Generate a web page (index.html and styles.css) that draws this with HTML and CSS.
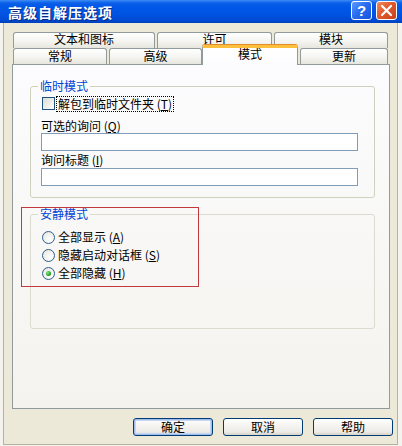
FILE: index.html
```html
<!DOCTYPE html>
<html lang="zh-CN">
<head>
<meta charset="utf-8">
<title>高级自解压选项</title>
<link rel="stylesheet" href="styles.css">
</head>
<body>
<div class="window">
  <div class="titlebar">
    <span class="title">高级自解压选项</span>
    <div class="caption-btns">
      <span class="cap help">?</span>
      <span class="cap close"><svg width="13" height="13" viewBox="0 0 13 13"><path d="M2 2 L11 11 M11 2 L2 11" stroke="#fff" stroke-width="2.2" stroke-linecap="round"/></svg></span>
    </div>
  </div>
  <div class="client">
    <div class="tabrow row1">
      <div class="tab t-text">文本和图标</div>
      <div class="tab t-license">许可</div>
      <div class="tab t-module">模块</div>
    </div>
    <div class="tabrow row2">
      <div class="tab t-general">常规</div>
      <div class="tab t-advanced">高级</div>
      <div class="tab t-mode selected">模式</div>
      <div class="tab t-update">更新</div>
    </div>
    <div class="panel">
      <fieldset class="group g1">
        <legend>临时模式</legend>
        <div class="check-row">
          <span class="checkbox"></span>
          <span class="focus">解包到临时文件夹 (<u>T</u>)</span>
        </div>
        <div class="field-label l1">可选的询问 (<u>Q</u>)</div>
        <div class="edit"></div>
        <div class="field-label l2">询问标题 (<u>I</u>)</div>
        <div class="edit e2"></div>
      </fieldset>
      <fieldset class="group g2">
        <legend>安静模式</legend>
        <div class="radio-row"><span class="radio"></span><span class="rlabel">全部显示 (<u>A</u>)</span></div>
        <div class="radio-row"><span class="radio"></span><span class="rlabel">隐藏启动对话框 (<u>S</u>)</span></div>
        <div class="radio-row"><span class="radio checked"></span><span class="rlabel">全部隐藏 (<u>H</u>)</span></div>
      </fieldset>
      <div class="highlight"></div>
    </div>
    <div class="buttons">
      <div class="btn default">确定</div>
      <div class="btn">取消</div>
      <div class="btn">帮助</div>
    </div>
  </div>
</div>
</body>
</html>
```
FILE: styles.css
```css
* { box-sizing: border-box; }
html, body { margin: 0; padding: 0; }
body {
  width: 402px;
  height: 446px;
  overflow: hidden;
  background: #f4f3ee;
  font-family: "Noto Sans CJK SC", "Noto Sans", sans-serif;
  font-size: 12px;
  color: #000;
}
.window { display: flex; flex-direction: column; }

/* title bar */
.titlebar {
  height: 23px;
  display: flex;
  align-items: center;
  justify-content: space-between;
  padding: 0 5px 0 8px;
  background: linear-gradient(#3d8df6 0, #0b5fe8 3px, #0057e7 7px, #0054e3 60%, #0049d2 90%, #003fb8 100%);
}
.title {
  color: #fff;
  font-weight: bold;
  font-size: 14px;
  letter-spacing: 1px;
  line-height: 16px;
  text-shadow: 1px 1px 0 #0a2a80;
}
.caption-btns { display: flex; gap: 4px; align-items: center; margin-top: -2px; }
.cap {
  width: 21px;
  height: 19px;
  border: 1px solid #fff;
  border-radius: 3px;
  display: flex;
  align-items: center;
  justify-content: center;
}
.help {
  background: linear-gradient(135deg, #5e9bff 0%, #2a6cf0 45%, #1554dc 100%);
  color: #fff;
  font-family: "Liberation Sans", sans-serif;
  font-weight: bold;
  font-size: 15px;
  line-height: 15px;
}
.close {
  background: linear-gradient(135deg, #f08a62 0%, #e15a2c 45%, #c8401a 100%);
}

/* client area */
.client {
  margin: 0 4px 0 3px;
  height: 422px;
  background: #ece9d8;
  border: 1px solid #b5b2a3;
  border-top: 0;
  padding: 9px 0 0 8px;
  display: flex;
  flex-direction: column;
}

/* tabs */
.tabrow { display: flex; height: 16px; margin-left: 1px; align-items: flex-start; }
.tab {
  height: 16px;
  border: 1px solid #919b9c;
  border-bottom: 0;
  border-radius: 3px 3px 0 0;
  background: linear-gradient(#ffffff, #f3f3ef 60%, #e6e5dd);
  text-align: center;
  line-height: 13px;
  white-space: nowrap;
}
.row1 .tab { line-height: 11px; }
.t-text { width: 142px; margin-right: 2px; }
.t-license { width: 115px; margin-right: 2px; }
.t-module { width: 114px; }
.t-general { width: 94px; margin-right: 2px; }
.t-advanced { width: 93px; }
.t-update { width: 88px; margin-left: 2px; }
.tab.selected {
  width: 96px;
  height: 20px;
  margin-top: -3px;
  position: relative;
  z-index: 1;
  border-top: 3px solid #fdc03d;
  box-shadow: 0 -1px 0 #e68b2c;
  background: linear-gradient(#ffffff, #fcfcfe);
  line-height: 12px;
}

/* panel */
.panel {
  position: relative;
  width: 378px;
  height: 345px;
  border: 1px solid #919b9c;
  background: linear-gradient(#fcfcfe, #f4f3ee);
  padding: 14px 0 0 17px;
  display: flex;
  flex-direction: column;
  align-items: flex-start;
}
.group {
  width: 345px;
  margin: 0;
  min-inline-size: 0;
  border: 1px solid #d0d0bf;
  border-radius: 3px;
  padding: 3px 10px 11px 10px;
}
.group legend {
  color: #0046d5;
  padding: 0 2px;
  margin-left: -3px;
  line-height: 14px;
}
.g2 { margin-top: 9px; padding-top: 7px; padding-bottom: 46px; border-color: #dcdbcf; }

.check-row { display: flex; align-items: center; height: 15px; }
.checkbox {
  width: 13px;
  height: 13px;
  margin-left: 1px;
  border: 1px solid #1c5180;
  background: linear-gradient(135deg, #dcdcd7, #f0f0ea 60%, #ffffff);
}
.focus {
  margin-left: 2px;
  padding: 0 1px;
  outline: 1px dotted #000;
  outline-offset: 0;
  line-height: 14px;
}
.field-label { line-height: 14px; }
.l1 { margin-top: 8px; }
.l2 { margin-top: 2px; }
.edit {
  width: 317px;
  height: 18px;
  border: 1px solid #7f9db9;
  background: #fff;
}
.e2 { margin-top: 1px; }

.radio-row { display: flex; align-items: center; height: 18px; }
.radio {
  width: 13px;
  height: 13px;
  margin-left: 1px;
  border-radius: 50%;
  border: 1px solid #2f5f8f;
  background: radial-gradient(circle at 65% 65%, #ffffff, #ecece6 70%, #d8d8d0);
  display: flex;
  align-items: center;
  justify-content: center;
}
.radio.checked::after {
  content: "";
  width: 5px;
  height: 5px;
  border-radius: 50%;
  background: radial-gradient(circle at 35% 35%, #8de38d, #21a121 60%, #137a13);
}
.rlabel { margin-left: 3px; line-height: 14px; }

.highlight {
  position: absolute;
  left: 8px;
  top: 142px;
  width: 178px;
  height: 80px;
  border: 1px solid #c23a3e;
}

/* buttons */
.buttons {
  display: flex;
  justify-content: flex-end;
  gap: 10px;
  margin-top: 9px;
  padding-right: 4px;
}
.btn {
  width: 80px;
  height: 18px;
  border: 1px solid #003c74;
  border-radius: 3px;
  background: linear-gradient(#ffffff, #f5f4f0 40%, #ecebe6 80%, #d8d2c6);
  text-align: center;
  line-height: 16px;
}
.btn.default {
  box-shadow: inset 0 0 0 1px #a3bdea, inset 0 0 0 2px #c5d5f5;
}
```
